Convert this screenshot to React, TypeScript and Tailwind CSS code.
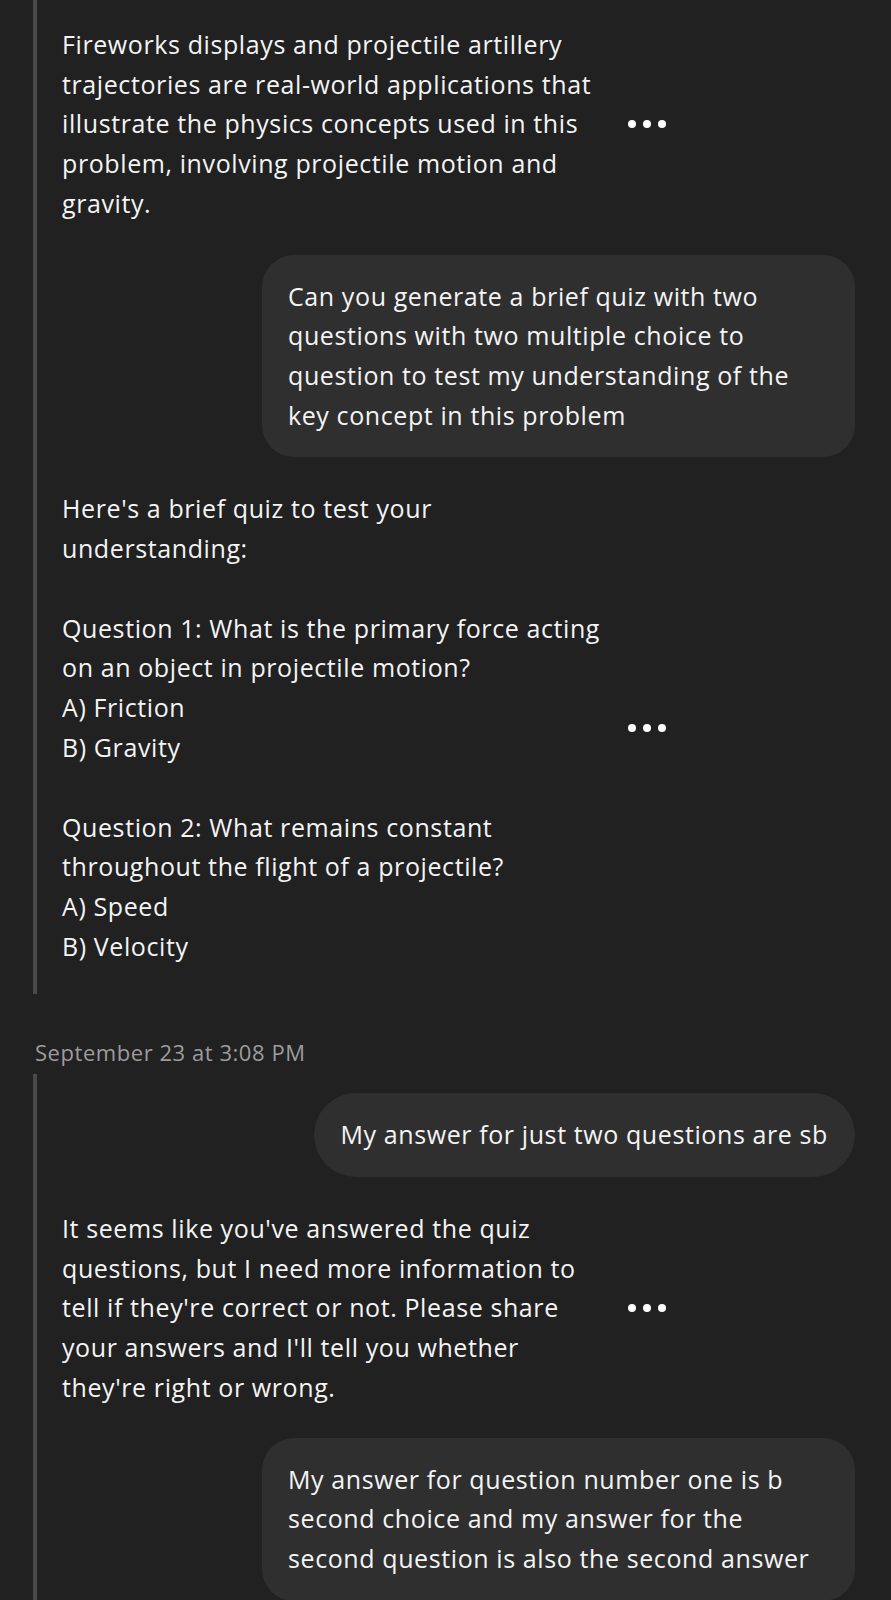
const Dots = () => (
  <div className="flex w-[64px] items-center justify-center gap-[7px]">
    <span className="h-[8px] w-[8px] rounded-full bg-white" />
    <span className="h-[8px] w-[8px] rounded-full bg-white" />
    <span className="h-[8px] w-[8px] rounded-full bg-white" />
  </div>
);

const AiMessage = ({ lines }: { lines: string[][] }) => (
  <div className="flex items-center">
    <div className="w-[578px] pl-[25px]">
      {lines.map((para, i) => (
        <p key={i} className={i > 0 ? "mt-[40px]" : ""}>
          {para.map((l, j) => (
            <span key={j} className="block whitespace-nowrap">
              {l}
            </span>
          ))}
        </p>
      ))}
    </div>
    <Dots />
  </div>
);

const UserBubble = ({ lines, pill }: { lines: string[]; pill?: boolean }) => (
  <div className="flex justify-end pr-[36px]">
    <div
      className={
        "bg-[#2f2f2f] py-[22px] " +
        (pill ? "rounded-full pl-[26px] pr-[27px]" : "w-[593px] rounded-[32px] pl-[26px]")
      }
    >
      {lines.map((l, i) => (
        <span key={i} className="block whitespace-nowrap">
          {l}
        </span>
      ))}
    </div>
  </div>
);

export default function App() {
  return (
    <div className="min-h-[1600px] w-[891px] overflow-hidden bg-[#212121] text-[25px] leading-[39.7px] tracking-[0.6px] text-[#f4f4f4] font-['Open_Sans',sans-serif]">
      <div className="ml-[33px] border-l-4 border-[#4a4a4a] pt-[25px] pb-[28px]">
        <AiMessage
          lines={[
            [
              "Fireworks displays and projectile artillery",
              "trajectories are real-world applications that",
              "illustrate the physics concepts used in this",
              "problem, involving projectile motion and",
              "gravity.",
            ],
          ]}
        />
        <div className="mt-[31px]">
          <UserBubble
            lines={[
              "Can you generate a brief quiz with two",
              "questions with two multiple choice to",
              "question to test my understanding of the",
              "key concept in this problem",
            ]}
          />
        </div>
        <div className="mt-[32px]">
          <AiMessage
            lines={[
              ["Here's a brief quiz to test your", "understanding:"],
              [
                "Question 1: What is the primary force acting",
                "on an object in projectile motion?",
                "A) Friction",
                "B) Gravity",
              ],
              [
                "Question 2: What remains constant",
                "throughout the flight of a projectile?",
                "A) Speed",
                "B) Velocity",
              ],
            ]}
          />
        </div>
      </div>

      <div className="ml-[35px] mt-[46px] text-[22px] leading-[24px] tracking-[0.55px] text-[#9c9c9c]">
        September 23 at 3:08 PM
      </div>

      <div className="ml-[33px] mt-[10px] border-l-4 border-[#4a4a4a] pt-[19px] pb-[40px]">
        <UserBubble pill lines={["My answer for just two questions are sb"]} />
        <div className="mt-[32px]">
          <AiMessage
            lines={[
              [
                "It seems like you've answered the quiz",
                "questions, but I need more information to",
                "tell if they're correct or not. Please share",
                "your answers and I'll tell you whether",
                "they're right or wrong.",
              ],
            ]}
          />
        </div>
        <div className="mt-[30px]">
          <UserBubble
            lines={[
              "My answer for question number one is b",
              "second choice and my answer for the",
              "second question is also the second answer",
            ]}
          />
        </div>
      </div>
    </div>
  );
}
